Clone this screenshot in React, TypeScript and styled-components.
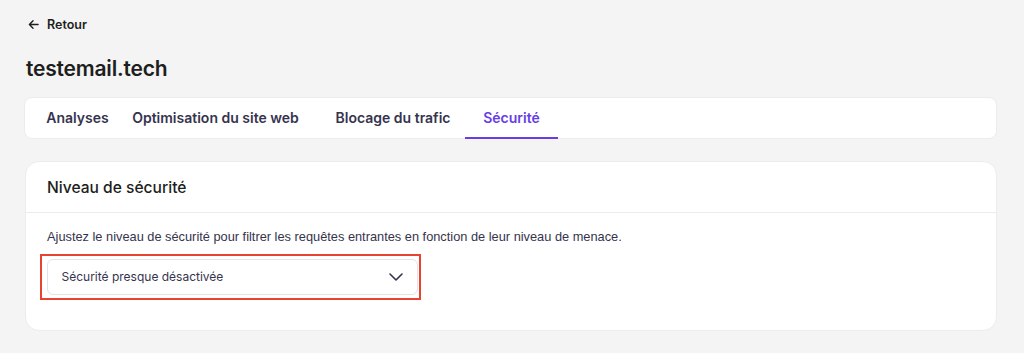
import * as React from 'react';
import styled, { createGlobalStyle } from 'styled-components';

const GlobalStyle = createGlobalStyle`
  html, body {
    margin: 0;
    padding: 0;
    background: #f4f4f5;
    font-family: Inter, 'Noto Sans', sans-serif;
    color: #1d1e20;
  }
`;

const tabs = [
  { label: 'Analyses', width: 65 },
  { label: 'Optimisation du site web', width: 211 },
  { label: 'Blocage du trafic', width: 144 },
  { label: 'Sécurité', width: 93 },
];

const App: React.FC = () => {
  const active = 3;
  return (
    <Page>
      <GlobalStyle />
      <Back>
        <svg width="11" height="11" viewBox="0 0 12 12" fill="none">
          <path d="M11 6H1.5M5.5 2L1.5 6l4 4" stroke="#1d1e20" strokeWidth="1.5" strokeLinecap="round" strokeLinejoin="round" />
        </svg>
        <span>Retour</span>
      </Back>
      <Title>testemail.tech</Title>
      <TabBar>
        {tabs.map((t, i) => (
          <Tab key={t.label} active={i === active} w={t.width}>
            {t.label}
          </Tab>
        ))}
      </TabBar>
      <Card>
        <CardHeader>Niveau de sécurité</CardHeader>
        <CardBody>
          <Description>
            Ajustez le niveau de sécurité pour filtrer les requêtes entrantes en fonction de leur niveau de menace.
          </Description>
          <Highlight>
            <Select>
              <span>Sécurité presque désactivée</span>
              <svg width="14" height="8" viewBox="0 0 14 8" fill="none">
                <path d="M1 1l6 6 6-6" stroke="#36344d" strokeWidth="1.6" strokeLinecap="round" strokeLinejoin="round" />
              </svg>
            </Select>
          </Highlight>
        </CardBody>
      </Card>
    </Page>
  );
};

const Page = styled.div`
  padding: 16px 27px 0 24px;
  box-sizing: border-box;
  width: 1024px;
  height: 353px;
`;

const Back = styled.div`
  display: flex;
  align-items: center;
  gap: 8px;
  padding-left: 4px;
  height: 16px;
  font-size: 12.5px;
  font-weight: 600;
  color: #1d1e20;
`;

const Title = styled.h1`
  margin: 23px 0 0 2px;
  font-size: 21px;
  line-height: 28px;
  font-weight: 600;
  letter-spacing: -0.2px;
`;

const TabBar = styled.div`
  display: flex;
  height: 42px;
  margin-top: 14px;
  background: #fff;
  border: 1px solid #ececef;
  border-radius: 8px;
  box-sizing: border-box;
  padding-left: 20px;
`;

const Tab = styled.div<{ active?: boolean; w: number }>`
  display: flex;
  align-items: center;
  justify-content: center;
  flex: 0 0 ${(p) => p.w}px;
  white-space: nowrap;
  font-size: 14px;
  font-weight: 600;
  color: ${(p) => (p.active ? '#673de6' : '#36344d')};
  border-bottom: 2px solid ${(p) => (p.active ? '#673de6' : 'transparent')};
  margin-bottom: -1px;
`;

const Card = styled.div`
  margin-top: 22px;
  background: #fff;
  border: 1px solid #ececef;
  border-radius: 14px;
  box-sizing: border-box;
  height: 170px;
  margin-left: 1px;
`;

const CardHeader = styled.div`
  height: 50px;
  display: flex;
  align-items: center;
  padding: 0 21px;
  border-bottom: 1px solid #ececef;
  font-size: 15.6px;
  font-weight: 500;
`;

const CardBody = styled.div`
  padding: 16px 21px 0;
`;

const Description = styled.p`
  margin: 0;
  font-family: 'Liberation Sans', Arial, sans-serif;
  font-size: 12.8px;
  line-height: 16px;
  color: #36344d;
`;

const Highlight = styled.div`
  margin: 9px 0 0 -7px;
  width: 381px;
  height: 46px;
  box-sizing: border-box;
  border: 2.5px solid #e8432f;
  padding: 2.5px 0 0 4.5px;
`;

const Select = styled.div`
  width: 371px;
  height: 36px;
  box-sizing: border-box;
  border: 1px solid #e3e3e8;
  border-radius: 6px;
  display: flex;
  align-items: center;
  justify-content: space-between;
  padding: 0 14px 0 14px;
  font-size: 12px;
  font-weight: 400;
  color: #36344d;
`;

export default App;
